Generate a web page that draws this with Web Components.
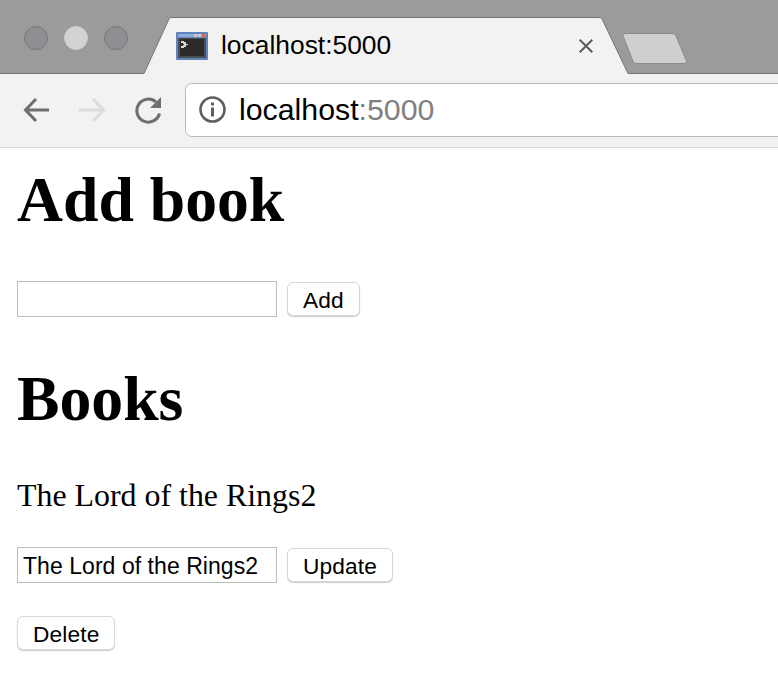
<!DOCTYPE html>
<html>
<head>
<meta charset="utf-8">
<title>localhost:5000</title>
<style>
    html, body { margin: 0; background: #fff; overflow: hidden; }
</style>
</head>
<body>
<browser-window title-text="localhost:5000" host="localhost" port=":5000">
    <section-heading style="--top: 0px">Add book</section-heading>
    <form-row style="--top: 29px">
        <text-field></text-field>
        <push-button>Add</push-button>
    </form-row>
    <section-heading style="--top: 30px">Books</section-heading>
    <book-title>The Lord of the Rings2</book-title>
    <form-row style="--top: 33px">
        <text-field value="The Lord of the Rings2"></text-field>
        <push-button>Update</push-button>
    </form-row>
    <form-row style="--top: 33px">
        <push-button>Delete</push-button>
    </form-row>
</browser-window>

<script>
const browserWindowTemplate = document.createElement('template');

browserWindowTemplate.innerHTML = `
    <style>
        :host {
            display: block;
            width: 778px;
            height: 678px;
            overflow: hidden;
            font-family: "Liberation Sans", Arial, sans-serif;
        }

        .strip {
            display: flex;
            align-items: flex-end;
            box-sizing: border-box;
            height: 74px;
            background: #9b9b9b;
            border-bottom: 1px solid #757575;
        }

        .lights {
            display: flex;
            gap: 16px;
            align-self: flex-start;
            margin: 26px 16px 0 24px;
        }

        .light {
            box-sizing: border-box;
            width: 24px;
            height: 24px;
            border-radius: 50%;
            background: #8f8e93;
            border: 1px solid #77767b;
        }

        .light.mid {
            background: #d3d3d3;
            border-color: #cfcfcf;
        }

        .tab {
            position: relative;
            display: flex;
            align-items: center;
            box-sizing: border-box;
            width: 484px;
            height: 57px;
            margin-bottom: -1px;
            padding: 0 35px 0 32px;
        }

        .tabShape {
            position: absolute;
            left: 0;
            top: 0;
        }

        .favicon, .tabTitle, .close {
            position: relative;
        }

        .tabTitle {
            flex: 1;
            margin: 0 0 1px 13px;
            color: #000;
            font-size: 26.4px;
            white-space: nowrap;
        }

        .newTab {
            margin: 0 0 9px -6px;
        }

        .toolbar {
            display: flex;
            align-items: center;
            box-sizing: border-box;
            height: 74px;
            padding: 0 0 2px 22px;
            background: #f2f2f2;
            border-bottom: 1px solid #d9d9d9;
        }

        .nav {
            display: flex;
            gap: 26px;
            margin: 1px 21px 0 0;
        }

        .omnibox {
            display: flex;
            align-items: center;
            box-sizing: border-box;
            flex: none;
            width: 640px;
            height: 54px;
            padding-left: 13px;
            background: #fff;
            border: 1px solid #b9b9b9;
            border-radius: 7px;
        }

        .host {
            margin: 1px 0 0 13px;
            font-size: 30.300px;
            color: #000;
            white-space: nowrap;
        }

        .port {
            color: #808080;
        }

        .page {
            display: flex;
            flex-direction: column;
            align-items: flex-start;
            padding-left: 17px;
            font-family: "Liberation Serif", "Times New Roman", serif;
        }
    </style>
    <div class="strip">
        <div class="lights">
            <div class="light"></div>
            <div class="light mid"></div>
            <div class="light"></div>
        </div>
        <div class="tab">
            <svg class="tabShape" width="484" height="57" viewBox="0 0 484 57">
                <path d="M0 57V56.500L25 2C25.700 1 26.500 .5 28 .5H455C456.500 .5 457.300 1 458 2L484 56.500V57Z" fill="#f2f2f2"/>
                <path d="M0 56.500L25 2C25.700 1 26.500 .5 28 .5H455C456.500 .5 457.300 1 458 2L484 56.500" fill="none" stroke="#757575"/>
            </svg>
            <svg class="favicon" width="32" height="28" viewBox="0 0 32 28">
                <rect width="32" height="28" rx="1" fill="#5f83bd"/>
                <rect x="2" y="2" width="28" height="3" fill="#8cabdc"/>
                <rect x="18" y="2" width="3" height="3" fill="#c3cbd8"/>
                <rect x="22" y="2" width="3" height="3" fill="#c3cbd8"/>
                <rect x="26" y="2" width="3" height="3" fill="#e8604c"/>
                <rect x="2" y="6" width="28" height="20" fill="#4d4d4d"/>
                <rect x="4" y="7" width="24" height="17" fill="#2b2b2b"/>
                <path d="M5 9h3v1h2v2h2v1h-2v2h-2v1h-3v-2h2v-1h1v-1h-1v-1h-2z" fill="#d8d8d8"/>
            </svg>
            <span class="tabTitle"></span>
            <svg class="close" width="14" height="14" viewBox="0 0 14 14">
                <path d="M.7 .7L13.300 13.300M13.300 .7L.7 13.300" stroke="#5a5a5a" stroke-width="2" fill="none"/>
            </svg>
        </div>
        <svg class="newTab" width="65" height="31" viewBox="0 0 65 31">
            <path d="M3 .5H50C52 .5 53 1 54 3L64 27C65 29.500 64 30.500 62 30.500H15C13 30.500 12 30 11 28L1 3C.5 1.500 1 .5 3 .5Z" fill="#cfcfcf" stroke="#8a8a8a"/>
        </svg>
    </div>
    <div class="toolbar">
        <div class="nav">
            <svg width="30" height="28" viewBox="0 0 30 28">
                <path d="M27 14H4M14 3L3.500 14L14 25" stroke="#6e6e6e" stroke-width="3" fill="none"/>
            </svg>
            <svg width="30" height="28" viewBox="0 0 30 28">
                <path d="M1 14H25M15 3L25.500 14L15 25" stroke="#dcdcdc" stroke-width="3" fill="none"/>
            </svg>
            <svg width="30" height="28" viewBox="0 0 30 28">
                <path d="M25.500 17.500A11.500 11.500 0 1 1 22 6" stroke="#6e6e6e" stroke-width="3" fill="none"/>
                <path d="M27 1V12H16Z" fill="#6e6e6e"/>
            </svg>
        </div>
        <div class="omnibox">
            <svg width="27" height="27" viewBox="0 0 27 27">
                <circle cx="13.500" cy="13.500" r="12" stroke="#5f5f5f" stroke-width="2.600" fill="none"/>
                <rect x="12" y="6.500" width="3" height="3" fill="#5f5f5f"/>
                <rect x="12" y="11.500" width="3" height="9" fill="#5f5f5f"/>
            </svg>
            <span class="host"></span>
        </div>
    </div>
    <div class="page"><slot></slot></div>
`;

class BrowserWindow extends HTMLElement {
    constructor() {
        super();

        let instance = browserWindowTemplate.content.cloneNode(true);

        instance.querySelector('.tabTitle').textContent = this.getAttribute('title-text');

        let host = instance.querySelector('.host');
        host.textContent = this.getAttribute('host');

        let port = document.createElement('span');
        port.className = 'port';
        port.textContent = this.getAttribute('port');
        host.appendChild(port);

        this.attachShadow({mode: 'open'}).appendChild(instance);
    }
}

const sectionHeadingTemplate = document.createElement('template');

sectionHeadingTemplate.innerHTML = `
    <style>
        :host {
            display: block;
            margin-top: var(--top, 0);
            font-size: 63.700px;
            font-weight: bold;
            line-height: 104px;
            color: #000;
        }
    </style>
    <slot></slot>
`;

class SectionHeading extends HTMLElement {
    constructor() {
        super();
        this.attachShadow({mode: 'open'}).appendChild(sectionHeadingTemplate.content.cloneNode(true));
    }
}

const bookTitleTemplate = document.createElement('template');

bookTitleTemplate.innerHTML = `
    <style>
        :host {
            display: block;
            margin-top: 27px;
            font-size: 31.900px;
            line-height: 36px;
            color: #000;
        }
    </style>
    <slot></slot>
`;

class BookTitle extends HTMLElement {
    constructor() {
        super();
        this.attachShadow({mode: 'open'}).appendChild(bookTitleTemplate.content.cloneNode(true));
    }
}

const formRowTemplate = document.createElement('template');

formRowTemplate.innerHTML = `
    <style>
        :host {
            display: flex;
            align-items: center;
            gap: 10px;
            margin-top: var(--top, 0);
        }
    </style>
    <slot></slot>
`;

class FormRow extends HTMLElement {
    constructor() {
        super();
        this.attachShadow({mode: 'open'}).appendChild(formRowTemplate.content.cloneNode(true));
    }
}

const textFieldTemplate = document.createElement('template');

textFieldTemplate.innerHTML = `
    <style>
        :host {
            display: block;
        }

        .textBox {
            display: block;
            box-sizing: border-box;
            width: 260px;
            height: 36px;
            margin: 0;
            padding: 2px 5px 0;
            background: #fff;
            border: 1px solid #bdbdbd;
            border-radius: 0;
            color: #000;
            font-family: "Liberation Sans", Arial, sans-serif;
            font-size: 23px;
            letter-spacing: 0.05px;
            outline: none;
        }
    </style>
    <input type="text" class="textBox" />
`;

class TextField extends HTMLElement {
    constructor() {
        super();

        let instance = textFieldTemplate.content.cloneNode(true);
        instance.querySelector('.textBox').setAttribute('value', this.getAttribute('value') || '');

        this.attachShadow({mode: 'open'}).appendChild(instance);
    }
}

const pushButtonTemplate = document.createElement('template');

pushButtonTemplate.innerHTML = `
    <style>
        :host {
            display: block;
        }

        .button {
            display: block;
            box-sizing: border-box;
            height: 34px;
            margin: 0;
            padding: 2px 15px 0;
            background: #fff;
            border: 1px solid #d8d8d8;
            border-radius: 6px;
            box-shadow: 0 1px 1px rgba(0,0,0,0.2);
            color: #000;
            font-family: "Liberation Sans", Arial, sans-serif;
            font-size: 22.700px;
            letter-spacing: 0.15px;
        }
    </style>
    <button class="button" type="button"><slot></slot></button>
`;

class PushButton extends HTMLElement {
    constructor() {
        super();
        this.attachShadow({mode: 'open'}).appendChild(pushButtonTemplate.content.cloneNode(true));
    }
}

customElements.define('browser-window', BrowserWindow);
customElements.define('section-heading', SectionHeading);
customElements.define('book-title', BookTitle);
customElements.define('form-row', FormRow);
customElements.define('text-field', TextField);
customElements.define('push-button', PushButton);
</script>
</body>
</html>
